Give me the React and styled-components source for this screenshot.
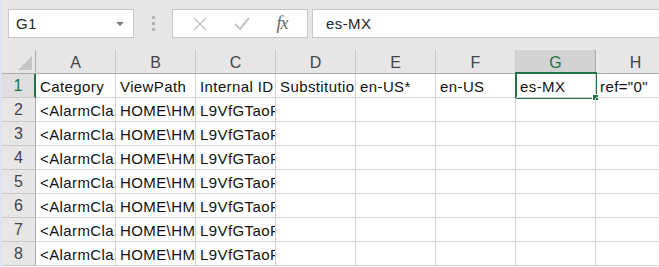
import React from 'react';
import styled, {createGlobalStyle} from 'styled-components';

const GlobalStyle = createGlobalStyle`
  html, body {
    margin: 0;
    padding: 0;
    background: #fff;
    overflow: hidden;
  }
  body {
    font-family: "Liberation Sans", Arial, sans-serif;
  }
`;

const Window = styled.div`
  width: 659px;
  height: 267px;
  display: flex;
  flex-direction: column;
  border-left: 2px solid #dde3ee;
  box-sizing: border-box;
  overflow: hidden;
`;

const Toolbar = styled.div`
  height: 50px;
  flex: none;
  display: flex;
  align-items: flex-start;
  padding: 9px 0 0 6px;
  box-sizing: border-box;
  background: #e6e6e6;
`;

const NameBox = styled.div`
  width: 126px;
  height: 29px;
  box-sizing: border-box;
  display: flex;
  align-items: center;
  justify-content: space-between;
  padding: 0 9px 0 7px;
  background: #fff;
  border: 1px solid #c6c6c6;
  font-size: 15px;
  letter-spacing: 0.3px;
  color: #262626;
`;

const Caret = styled.span`
  width: 0;
  height: 0;
  border-left: 4px solid transparent;
  border-right: 4px solid transparent;
  border-top: 4px solid #7a7a7a;
`;

const Grip = styled.div`
  width: 38px;
  height: 29px;
  display: flex;
  flex-direction: column;
  align-items: center;
  justify-content: center;
  gap: 3px;
  span {
    width: 3px;
    height: 3px;
    background: #b4b4b4;
  }
`;

const FormulaButtons = styled.div`
  width: 136px;
  height: 29px;
  box-sizing: border-box;
  display: flex;
  align-items: center;
  justify-content: space-around;
  padding: 0 6px;
  background: #fff;
  border: 1px solid #c6c6c6;
`;

const Fx = styled.span`
  font-family: "Liberation Serif", "Times New Roman", serif;
  font-style: italic;
  font-size: 18px;
  color: #666;
  letter-spacing: -1px;
`;

const FormulaInput = styled.div`
  flex: 1;
  height: 29px;
  margin-left: 4px;
  box-sizing: border-box;
  display: flex;
  align-items: center;
  padding-left: 13px;
  background: #fff;
  border: 1px solid #c6c6c6;
  border-right: none;
  font-size: 15px;
  letter-spacing: 0.4px;
  color: #262626;
`;

const Sheet = styled.div`
  display: grid;
  grid-template-columns: 34px repeat(8, 80px);
  grid-auto-rows: 24px;
`;

const Corner = styled.div`
  position: relative;
  background: #e6e6e6;
  border-right: 1px solid #ababab;
  border-bottom: 1px solid #ababab;
  &::after {
    content: '';
    position: absolute;
    right: 3px;
    bottom: 3px;
    width: 0;
    height: 0;
    border-left: 14px solid transparent;
    border-bottom: 14px solid #c4c4c4;
  }
`;

const ColHead = styled.div`
  display: flex;
  align-items: center;
  justify-content: center;
  background: ${p => (p.$active ? '#d2d2d2' : '#e6e6e6')};
  color: ${p => (p.$active ? '#217346' : '#444')};
  border-right: 1px solid ${p => (p.$active ? '#ababab' : '#c8c8c8')};
  border-bottom: 1px solid ${p => (p.$active ? '#217346' : '#ababab')};
  font-size: 16px;
  padding-top: 2px;
  box-sizing: border-box;
`;

const RowHead = styled.div`
  display: flex;
  align-items: center;
  justify-content: center;
  background: ${p => (p.$active ? '#dedede' : '#e6e6e6')};
  color: ${p => (p.$active ? '#217346' : '#444')};
  border-right: ${p => (p.$active ? '2px solid #217346' : '1px solid #ababab')};
  border-bottom: 1px solid #c8c8c8;
  font-size: 16px;
  padding-top: 1px;
  box-sizing: border-box;
`;

const Cell = styled.div`
  position: relative;
  display: flex;
  align-items: center;
  padding: 2px 0 0 4px;
  border-right: 1px solid #d4d4d4;
  border-bottom: 1px solid #d4d4d4;
  box-sizing: border-box;
  overflow: hidden;
  white-space: nowrap;
  font-size: 15px;
  letter-spacing: 0.4px;
  color: #111;
  min-width: 0;
`;

const Selection = styled.div`
  position: relative;
  &::before {
    content: '';
    position: absolute;
    left: -1px;
    top: -2px;
    right: -1px;
    bottom: -1px;
    border: 2px solid #217346;
    pointer-events: none;
  }
  &::after {
    content: '';
    position: absolute;
    right: -3px;
    bottom: -3px;
    width: 5px;
    height: 5px;
    background: #217346;
    border: 1px solid #fff;
  }
`;

const columns = ['A', 'B', 'C', 'D', 'E', 'F', 'G', 'H'];
const header = ['Category', 'ViewPath', 'Internal ID', 'Substitution', 'en-US*', 'en-US', 'es-MX', 'ref="0"'];
const dataRow = ['<AlarmClass', 'HOME\\HMI', 'L9VfGTaoPx', '', '', '', '', ''];

const XIcon = () => (
  <svg width="14" height="14" viewBox="0 0 14 14">
    <path d="M1 1 L13 13 M13 1 L1 13" stroke="#c3c3c3" strokeWidth="1.5" fill="none" />
  </svg>
);

const CheckIcon = () => (
  <svg width="16" height="13" viewBox="0 0 16 13">
    <path d="M1 7 L6 12 L15 1" stroke="#c3c3c3" strokeWidth="2" fill="none" />
  </svg>
);

const App = () => {
  const rows = [header, ...Array.from({length: 7}, () => dataRow)];
  return (
    <Window>
      <GlobalStyle />
      <Toolbar>
        <NameBox>
          G1
          <Caret />
        </NameBox>
        <Grip>
          <span />
          <span />
          <span />
        </Grip>
        <FormulaButtons>
          <XIcon />
          <CheckIcon />
          <Fx>fx</Fx>
        </FormulaButtons>
        <FormulaInput>es-MX</FormulaInput>
      </Toolbar>
      <Sheet>
        <Corner />
        {columns.map(c => (
          <ColHead key={c} $active={c === 'G'}>
            {c}
          </ColHead>
        ))}
        {rows.map((row, r) => (
          <React.Fragment key={r}>
            <RowHead $active={r === 0}>{r + 1}</RowHead>
            {row.map((v, c) =>
              r === 0 && c === 6 ? (
                <Selection key={c}>
                  <Cell style={{height: '100%'}}>{v}</Cell>
                </Selection>
              ) : (
                <Cell key={c}>{v}</Cell>
              )
            )}
          </React.Fragment>
        ))}
      </Sheet>
    </Window>
  );
};

export default App;
